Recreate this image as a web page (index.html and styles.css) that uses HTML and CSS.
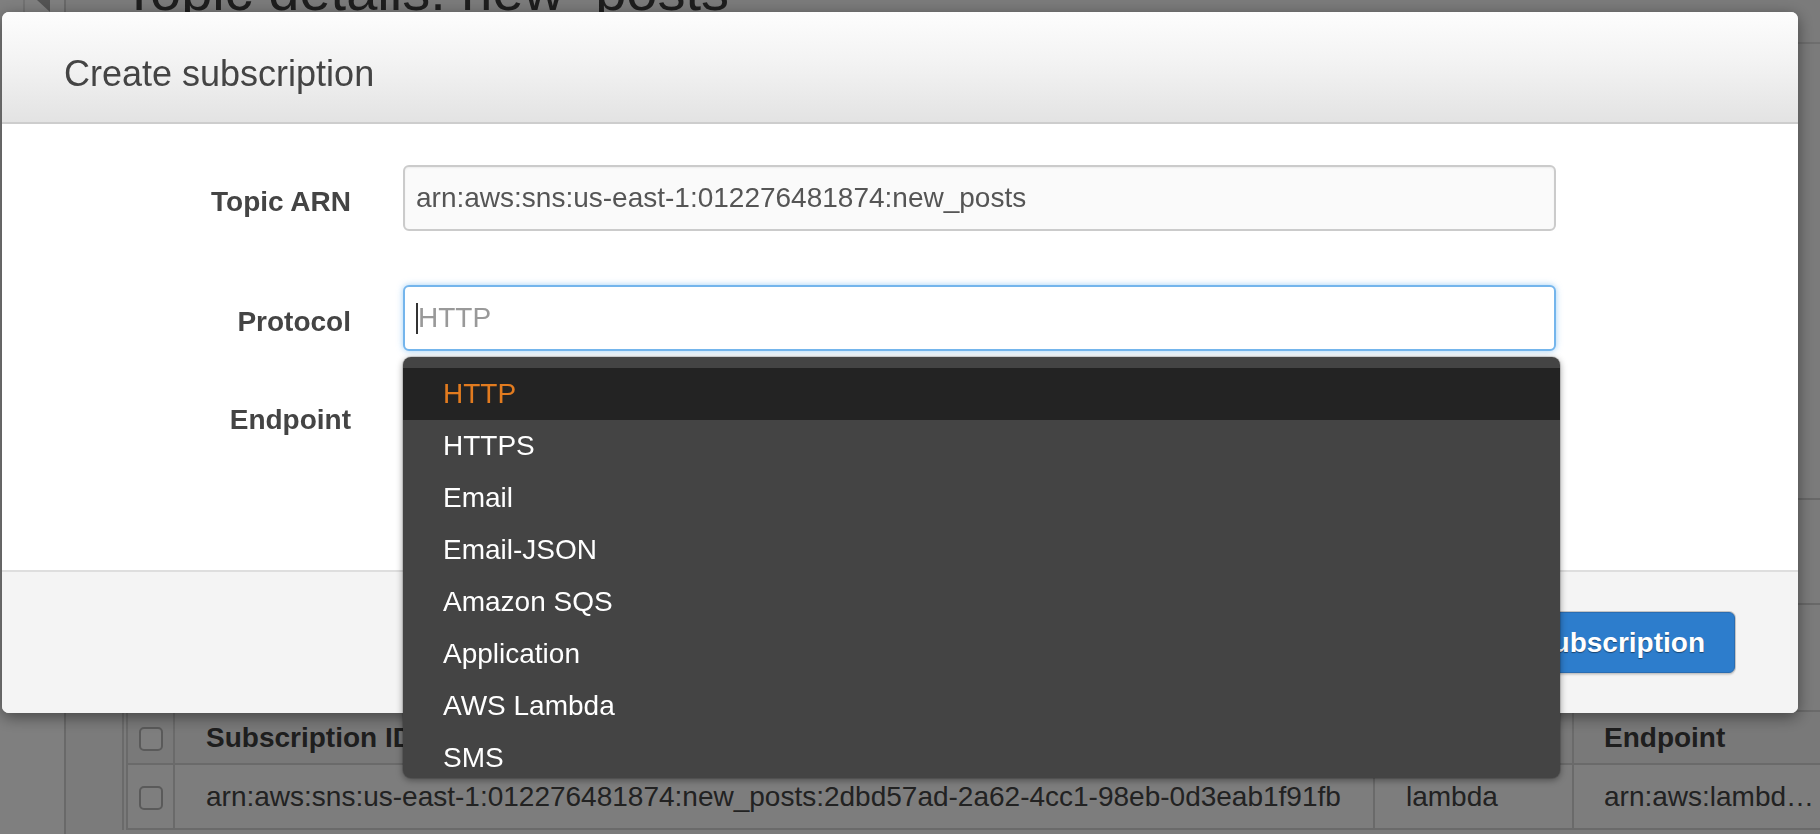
FILE: index.html
```html
<!DOCTYPE html>
<html lang="en">
<head>
<meta charset="utf-8">
<title>Create subscription</title>
<link rel="stylesheet" href="styles.css">
</head>
<body>
<div class="page">
  <aside class="rail">
    <div class="rail-toggle-btn"><span class="rail-toggle"></span></div>
  </aside>
  <main class="content">
    <h1 class="page-title">Topic details: new_posts</h1>
    <section class="details-panel"></section>
    <div class="actions-bar"></div>
    <div class="table-wrap">
      <table class="subs">
        <thead>
          <tr>
            <th class="col-cb"><span class="checkbox"></span></th>
            <th class="col-id">Subscription ID</th>
            <th class="col-proto">Protocol</th>
            <th class="col-end">Endpoint</th>
          </tr>
        </thead>
        <tbody>
          <tr>
            <td class="col-cb"><span class="checkbox"></span></td>
            <td>arn:aws:sns:us-east-1:012276481874:new_posts:2dbd57ad-2a62-4cc1-98eb-0d3eab1f91fb</td>
            <td>lambda</td>
            <td class="col-end"><div class="trunc">arn:aws:lambda:us-east-1:012276481874:function:new_post_handler</div></td>
          </tr>
        </tbody>
      </table>
    </div>
  </main>
</div>

<div class="backdrop"></div>

<div class="modal">
  <header class="modal-header">
    <h2 class="modal-title">Create subscription</h2>
  </header>
  <div class="modal-body">
    <div class="field field-topic">
      <label class="field-label">Topic ARN</label>
      <div class="field-control">
        <input class="text-input readonly" type="text" value="arn:aws:sns:us-east-1:012276481874:new_posts" readonly>
      </div>
    </div>
    <div class="field">
      <label class="field-label">Protocol</label>
      <div class="field-control combo">
        <div class="text-input focused"><span class="caret"></span><span class="placeholder">HTTP</span></div>
        <ul class="dropdown">
          <li class="option active">HTTP</li>
          <li class="option">HTTPS</li>
          <li class="option">Email</li>
          <li class="option">Email-JSON</li>
          <li class="option">Amazon SQS</li>
          <li class="option">Application</li>
          <li class="option">AWS Lambda</li>
          <li class="option">SMS</li>
        </ul>
      </div>
    </div>
    <div class="field">
      <label class="field-label">Endpoint</label>
      <div class="field-control">
        <input class="text-input" type="text">
      </div>
    </div>
  </div>
  <footer class="modal-footer">
    <a class="cancel-link">Cancel</a>
    <button class="btn-primary" type="button">Create subscription</button>
  </footer>
</div>
</body>
</html>
```

FILE: styles.css
```css
html, body {
  margin: 0;
  padding: 0;
  height: 834px;
  overflow: hidden;
}

body {
  font-family: "Liberation Sans", Arial, Helvetica, sans-serif;
  background: #f6f6f6;
  color: #444;
}

/* ---------- background page ---------- */
.page {
  display: flex;
  height: 834px;
  overflow: hidden;
}

.rail {
  flex: 0 0 66px;
  box-sizing: border-box;
  background: #ffffff;
  border-right: 2px solid #d2d2d2;
  padding-left: 23px;
}

.rail-toggle-btn {
  height: 12px;
  border-left: 2px solid #e4e4e4;
  padding-left: 12px;
  overflow: hidden;
}

.rail-toggle {
  display: block;
  width: 0;
  height: 0;
  margin-top: -12px;
  border-right: 13px solid #a8a8a8;
  border-top: 12px solid transparent;
  border-bottom: 12px solid transparent;
}

.content {
  flex: 1;
  min-width: 0;
  padding-left: 56px;
}

.page-title {
  margin: -41px 0 0 0;
  font-size: 56px;
  line-height: 64px;
  font-weight: normal;
  color: #3c3c3c;
  white-space: nowrap;
}

.details-panel {
  margin-top: 19px;
  height: 454px;
  border-top: 2px solid #dcdcdc;
  border-bottom: 2px solid #d0d0d0;
}

.actions-bar {
  height: 103px;
  border-bottom: 2px solid #d0d0d0;
}

.table-wrap {
  margin-top: 105px;
  border-left: 2px solid #d4d4d4;
  padding-left: 2px;
}

.subs {
  border-collapse: separate;
  border-spacing: 0;
  table-layout: fixed;
  width: 1750px;
  border-left: 2px solid #d4d4d4;
  border-top: 2px solid #d4d4d4;
  font-size: 28px;
  color: #444;
}

.subs th,
.subs td {
  border-right: 2px solid #d4d4d4;
  border-bottom: 2px solid #d4d4d4;
  padding: 0 0 0 31px;
  text-align: left;
  white-space: nowrap;
  overflow: hidden;
  vertical-align: middle;
}

.subs th {
  height: 51px;
  background: #f3f3f3;
  font-weight: bold;
  color: #3c3c3c;
}

.subs td {
  height: 63px;
  background: #fafafa;
}

.subs .col-cb {
  width: 45px;
  padding: 0;
  text-align: center;
}

.subs .col-id { width: 1167px; }
.subs .col-proto { width: 166px; }
.subs .col-end { width: 270px; padding-left: 30px; }

.checkbox {
  display: inline-block;
  width: 24px;
  height: 24px;
  box-sizing: border-box;
  border: 2px solid #b4b4b4;
  border-radius: 5px;
  background: #fcfcfc;
  vertical-align: middle;
}

.trunc {
  width: 216px;
  overflow: hidden;
  text-overflow: ellipsis;
  white-space: nowrap;
}

.backdrop {
  position: fixed;
  inset: 0;
  background: rgba(0, 0, 0, 0.5);
}

/* ---------- modal ---------- */
.modal {
  position: fixed;
  left: 2px;
  top: 12px;
  width: 1796px;
  height: 701px;
  background: #ffffff;
  border-radius: 7px;
  box-shadow: 0 4px 16px rgba(0, 0, 0, 0.45);
  display: flex;
  flex-direction: column;
}

.modal-header {
  flex: 0 0 112px;
  box-sizing: border-box;
  border-bottom: 2px solid #cdcdcd;
  border-radius: 7px 7px 0 0;
  background: linear-gradient(to bottom, #fdfdfd 0%, #f3f3f3 45%, #e3e3e3 100%);
  padding: 40px 0 0 62px;
}

.modal-title {
  margin: 0;
  font-size: 36px;
  line-height: 43px;
  font-weight: normal;
  color: #444;
}

.modal-body {
  flex: 1;
  padding-top: 41px;
}

.field {
  display: flex;
  margin-bottom: 32px;
}

.field-topic {
  margin-bottom: 54px;
}

.field-label {
  flex: 0 0 349px;
  text-align: right;
  padding-top: 21px;
  line-height: 32px;
  font-size: 28px;
  font-weight: bold;
  color: #444;
}

.field-control {
  width: 1153px;
  margin-left: 52px;
}

.combo {
  position: relative;
}

.text-input {
  display: flex;
  align-items: center;
  width: 100%;
  height: 66px;
  box-sizing: border-box;
  margin: 0;
  padding: 0 11px;
  border: 2px solid #cbcbcb;
  border-radius: 6px;
  background: #ffffff;
  font-family: "Liberation Sans", Arial, Helvetica, sans-serif;
  font-size: 28px;
  color: #555;
  outline: none;
  box-shadow: inset 0 1px 2px rgba(0, 0, 0, 0.06);
}

.text-input.readonly {
  background: #fafafa;
}

.text-input.focused {
  border-color: #74b5ec;
  box-shadow: 0 0 6px rgba(82, 168, 236, 0.55);
}

.caret {
  display: block;
  width: 2px;
  height: 31px;
  background: #333;
}

.placeholder {
  color: #999;
}

.dropdown {
  position: absolute;
  left: 0;
  top: calc(100% + 6px);
  z-index: 5;
  width: 1157px;
  height: 421px;
  box-sizing: border-box;
  margin: 0;
  padding: 11px 0 0;
  list-style: none;
  overflow: hidden;
  background: #444444;
  border-radius: 8px;
  box-shadow: 0 0 0 1px rgba(0, 0, 0, 0.12), 0 2px 7px rgba(0, 0, 0, 0.4);
}

.option {
  height: 52px;
  line-height: 52px;
  padding-left: 40px;
  font-size: 28px;
  color: #ffffff;
  white-space: nowrap;
}

.option.active {
  background: #232323;
  color: #e27b1f;
}

.modal-footer {
  flex: 0 0 143px;
  box-sizing: border-box;
  border-top: 2px solid #dedede;
  border-radius: 0 0 7px 7px;
  background: #f4f4f4;
  display: flex;
  align-items: center;
  justify-content: flex-end;
  gap: 30px;
  padding: 0 63px 0 0;
}

.cancel-link {
  font-size: 28px;
  color: #3b73b9;
}

.btn-primary {
  height: 61px;
  padding: 0 29px;
  border: 1px solid #2a6db2;
  border-radius: 6px;
  background: #2d7dcc;
  color: #ffffff;
  font-family: "Liberation Sans", Arial, Helvetica, sans-serif;
  font-size: 28px;
  font-weight: bold;
  text-shadow: 0 1px 1px rgba(0, 0, 0, 0.45);
  box-shadow: 0 0 0 1px #c4c4c4, 0 2px 2px rgba(0, 0, 0, 0.15);
}
```
